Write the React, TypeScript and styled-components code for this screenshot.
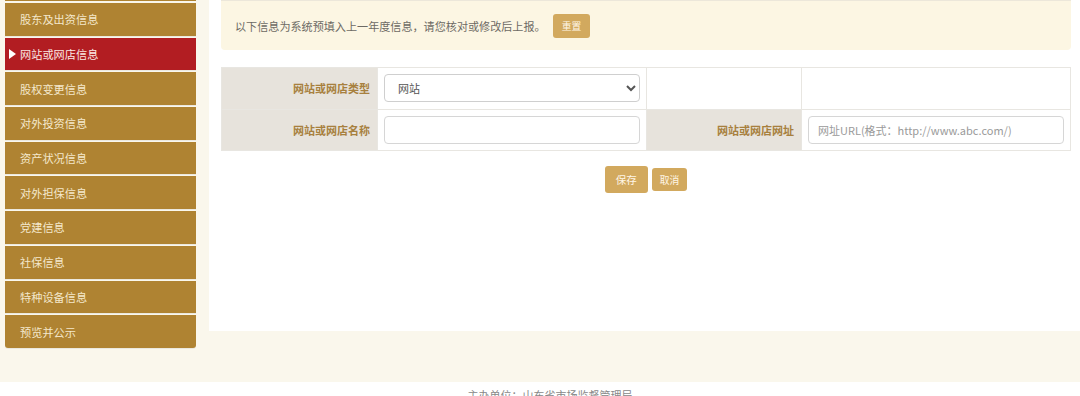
import styled, { createGlobalStyle } from 'styled-components'

const GlobalStyle = createGlobalStyle`
  html, body {
    margin: 0;
    padding: 0;
    background: #faf7ec;
    font-family: "Noto Sans CJK SC", "Noto Sans", sans-serif;
    overflow: hidden;
  }
`

const menuItems = [
  '股东及出资信息',
  '网站或网店信息',
  '股权变更信息',
  '对外投资信息',
  '资产状况信息',
  '对外担保信息',
  '党建信息',
  '社保信息',
  '特种设备信息',
  '预览并公示',
]

const Page = styled.div`
  display: flex;
  flex-direction: column;
  height: 396px;
  overflow: hidden;
`

const Body = styled.div`
  display: flex;
  align-items: flex-start;
  flex-shrink: 0;
  padding-left: 5px;
  height: 382px;
`

// the list is scrolled: only the bottom edge of the item above shows
const SideMenu = styled.ul`
  list-style: none;
  margin: 0;
  padding: 0;
  width: 192px;
  display: flex;
  flex-direction: column;
  gap: 2px;
  border-top: 1.5px solid #af8332;
  padding-top: 2px;
`

const MenuItem = styled.li<{ $active?: boolean; $last?: boolean }>`
  position: relative;
  height: 32.7px;
  display: flex;
  align-items: center;
  padding-left: 15px;
  background: ${p => (p.$active ? '#b21d22' : '#af8332')};
  color: ${p => (p.$active ? '#fbe9e4' : '#f4e8cc')};
  font-size: 11.2px;
  border-radius: ${p => (p.$last ? '0 0 3px 3px' : '0')};
  box-shadow: 0 1px 0 rgba(0, 0, 0, 0.06);
  &::before {
    content: '';
    display: ${p => (p.$active ? 'block' : 'none')};
    position: absolute;
    left: 4px;
    top: 50%;
    margin-top: -5px;
    border-left: 7px solid #fff;
    border-top: 5px solid transparent;
    border-bottom: 5px solid transparent;
  }
`

const Panel = styled.div`
  flex: 1;
  margin-left: 13px;
  background: #fff;
  height: 331px;
  padding: 0 9px 0 12px;
  box-sizing: border-box;
`

const Notice = styled.div`
  height: 50px;
  background: #fcf6e3;
  border-top: 1px solid #ece7da;
  border-radius: 0 0 4px 4px;
  display: flex;
  align-items: center;
  padding-left: 14px;
  box-sizing: border-box;
  color: #6d6a64;
  font-size: 11.1px;
`

const SmallButton = styled.button<{ $big?: boolean }>`
  border: none;
  border-radius: 3px;
  background: #d2a95e;
  color: #fff6e6;
  font-family: inherit;
  font-size: ${p => (p.$big ? '10.5px' : '9.8px')};
  height: ${p => (p.$big ? '27px' : '23px')};
  padding: 0 ${p => (p.$big ? '11px' : '8px')};
  cursor: pointer;
`

const NoticeButton = styled(SmallButton)`
  margin-left: 7px;
  height: 24px;
  padding: 0 9px;
`

const FormTable = styled.table`
  margin-top: 17px;
  width: 849px;
  border-collapse: collapse;
  table-layout: fixed;
  font-size: 11px;
  td {
    border: 1px solid #e8e6e1;
    height: 41.5px;
    box-sizing: border-box;
  }
`

const LabelCell = styled.td`
  background: #e7e3dc;
  color: #a7803e;
  font-weight: bold;
  text-align: right;
  padding-right: 7px;
`

const ValueCell = styled.td`
  background: #fff;
  padding: 0 6px;
`

const Select = styled.select`
  width: 100%;
  height: 28px;
  border: 1px solid #cfcfcf;
  border-radius: 4px;
  background: #fff;
  padding: 0 9px;
  font-family: inherit;
  font-size: 11px;
  color: #555;
`

const Input = styled.input`
  width: 100%;
  height: 28px;
  box-sizing: border-box;
  border: 1px solid #d6d6d6;
  border-radius: 4px;
  padding: 0 9px;
  font-family: inherit;
  font-size: 11px;
  color: #555;
  &::placeholder {
    color: #9a9a9a;
  }
`

const Actions = styled.div`
  display: flex;
  justify-content: center;
  align-items: center;
  gap: 4px;
  margin-top: 15px;
`

const Footer = styled.div`
  background: #fff;
  flex: 1 0 auto;
  text-align: center;
  padding-top: 5px;
  padding-left: 20px;
  font-size: 11px;
  color: #888;
`

export default function App() {
  return (
    <Page>
      <GlobalStyle />
      <Body>
        <SideMenu>
          {menuItems.map((item, i) => (
            <MenuItem key={item} $active={i === 1} $last={i === menuItems.length - 1}>
              {item}
            </MenuItem>
          ))}
        </SideMenu>
        <Panel>
          <Notice>
            以下信息为系统预填入上一年度信息，请您核对或修改后上报。
            <NoticeButton>重置</NoticeButton>
          </Notice>
          <FormTable>
            <colgroup>
              <col style={{ width: 156 }} />
              <col style={{ width: 269 }} />
              <col style={{ width: 155 }} />
              <col style={{ width: 269 }} />
            </colgroup>
            <tbody>
              <tr>
                <LabelCell>网站或网店类型</LabelCell>
                <ValueCell>
                  <Select defaultValue="网站">
                    <option>网站</option>
                    <option>网店</option>
                  </Select>
                </ValueCell>
                <ValueCell />
                <ValueCell />
              </tr>
              <tr>
                <LabelCell>网站或网店名称</LabelCell>
                <ValueCell>
                  <Input />
                </ValueCell>
                <LabelCell>网站或网店网址</LabelCell>
                <ValueCell>
                  <Input placeholder="网址URL(格式：http://www.abc.com/)" />
                </ValueCell>
              </tr>
            </tbody>
          </FormTable>
          <Actions>
            <SmallButton $big>保存</SmallButton>
            <SmallButton>取消</SmallButton>
          </Actions>
        </Panel>
      </Body>
      <Footer>主办单位：山东省市场监督管理局</Footer>
    </Page>
  )
}
